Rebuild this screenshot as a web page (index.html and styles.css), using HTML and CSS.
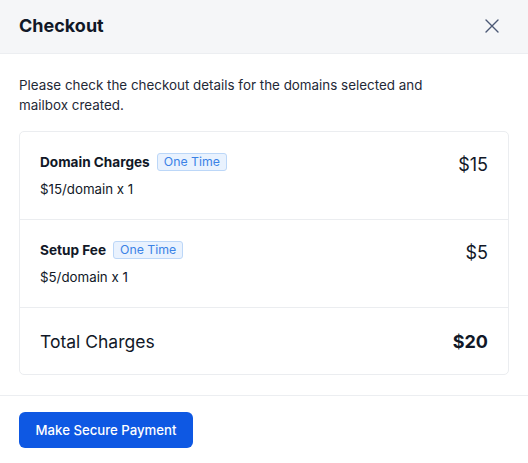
FILE: index.html
```html
<!DOCTYPE html>
<html>
<head>
<meta charset="utf-8">
<link rel="stylesheet" href="styles.css">
</head>
<body>
<div class="modal">
  <div class="header">
    <h2 class="title">Checkout</h2>
    <button class="close" aria-label="Close">
      <svg width="14" height="14" viewBox="0 0 14 14"><path d="M1 1L13 13M13 1L1 13" stroke="#4b5875" stroke-width="1.4" stroke-linecap="round"/></svg>
    </button>
  </div>
  <div class="body">
    <p class="intro">Please check the checkout details for the domains selected and mailbox created.</p>
    <div class="card">
      <div class="row">
        <div class="info">
          <div class="name-line"><span class="name">Domain Charges</span><span class="badge">One Time</span></div>
          <div class="sub">$15/domain x 1</div>
        </div>
        <div class="price">$15</div>
      </div>
      <div class="row">
        <div class="info">
          <div class="name-line"><span class="name">Setup Fee</span><span class="badge">One Time</span></div>
          <div class="sub">$5/domain x 1</div>
        </div>
        <div class="price">$5</div>
      </div>
      <div class="total">
        <span class="total-label">Total Charges</span>
        <span class="total-value">$20</span>
      </div>
    </div>
  </div>
  <div class="footer">
    <button class="pay">Make Secure Payment</button>
  </div>
</div>
</body>
</html>
```
FILE: styles.css
```css
* { box-sizing: border-box; }
html, body { margin: 0; padding: 0; background: #fff; }
body { font-family: Inter, "Noto Sans", sans-serif; color: #111827; }
.modal { width: 528px; height: 463px; background: #fff; }
.header {
  height: 54px;
  background: #f5f6f8;
  border-bottom: 1px solid #eceef1;
  display: flex;
  align-items: center;
  justify-content: space-between;
  padding: 0 29px 2px 19px;
}
.title { margin: 0; font-size: 18px; font-weight: 700; color: #111827; }
.close { border: 0; background: none; padding: 0; width: 14px; height: 14px; display: flex; cursor: pointer; }
.body { padding: 22px 19px 20px; border-bottom: 1px solid #eceef1; }
.intro { margin: 0 0 16px; font-size: 13.4px; line-height: 19.5px; color: #1f2937; max-width: 420px; }
.card { border: 1px solid #ebedf0; border-radius: 5px; }
.row {
  display: flex;
  justify-content: space-between;
  align-items: flex-start;
  padding: 21px 20px 20px;
  border-bottom: 1px solid #ebedf0;
}
.name-line { display: flex; align-items: center; gap: 7px; height: 18px; }
.name { font-size: 13.6px; font-weight: 700; color: #111827; }
.badge {
  font-size: 12.3px;
  line-height: 16px;
  color: #3b82e6;
  background: #e9f2fe;
  border: 1px solid #bcd7f8;
  border-radius: 3px;
  padding: 0 6px;
  height: 18px;
}
.sub { margin-top: 8px; font-size: 13.3px; line-height: 20px; color: #111827; }
.price { font-size: 18px; line-height: 24px; color: #111827; }
.total {
  display: flex;
  justify-content: space-between;
  align-items: center;
  padding: 22px 20px 20px;
}
.total-label { font-size: 17.5px; line-height: 24px; color: #111827; }
.total-value { font-size: 18px; line-height: 24px; font-weight: 700; color: #111827; }
.footer { padding: 16px 19px; }
.pay {
  width: 174px;
  height: 36px;
  border: 0;
  border-radius: 6px;
  background: #0e58e3;
  color: #fff;
  font-family: Inter, "Noto Sans", sans-serif;
  font-size: 13.2px;
  font-weight: 500;
  cursor: pointer;
  padding: 0;
}
```
